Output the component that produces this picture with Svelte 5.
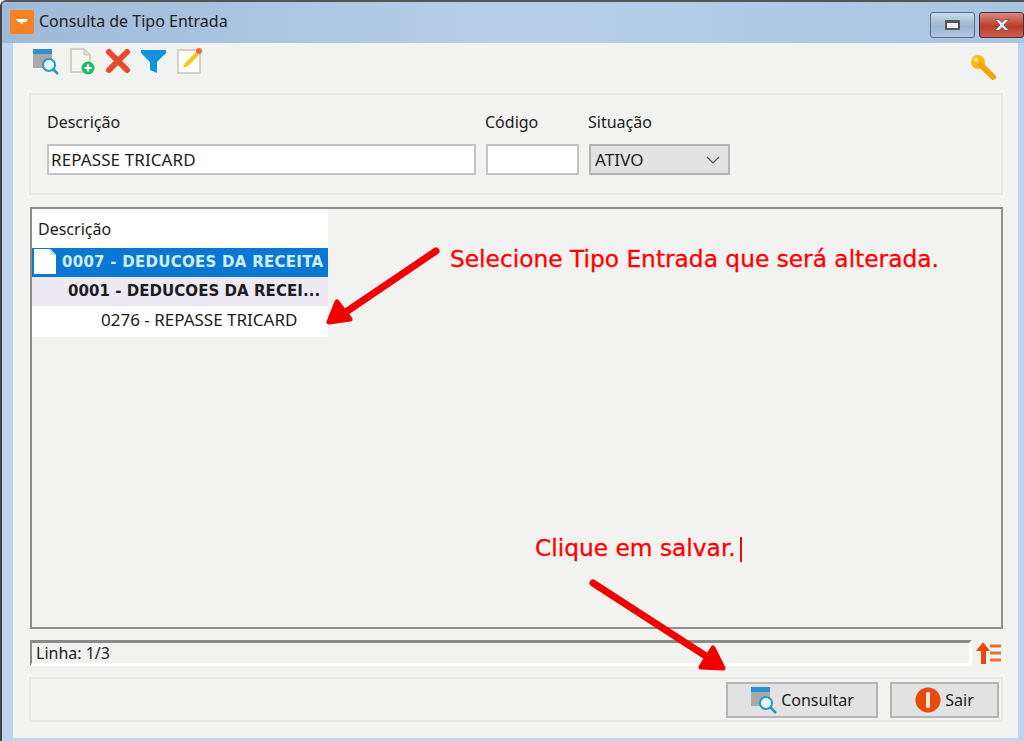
<script>
  const rows = [
    { text: "0007 - DEDUCOES DA RECEITA", cls: "selected" },
    { text: "0001 - DEDUCOES DA RECEI...", cls: "group" },
    { text: "0276 - REPASSE TRICARD", cls: "leaf" }
  ];
</script>

<div class="window">
  <header class="titlebar">
    <span class="app-icon">
      <svg width="24" height="24" viewBox="0 0 24 24">
        <rect width="24" height="24" rx="2" fill="#f58220" />
        <path d="M6 9h12l-2 3h-3l-1 3-2-3H8z" fill="#fff" />
      </svg>
    </span>
    <span class="title">Consulta de Tipo Entrada</span>
    <div class="win-buttons">
      <div class="win-btn restore"><span></span></div>
      <div class="win-btn close">
        <svg width="20" height="14" viewBox="0 0 20 14">
          <path d="M3 1.500h4l3 3 3-3h4l-5 5.500 5 5.500h-4l-3-3-3 3H3l5-5.500z" fill="#eee" stroke="#555" stroke-width=".8" />
        </svg>
      </div>
    </div>
  </header>

  <main class="content">
    <div class="toolbar">
      <div class="tools">
        <svg width="28" height="28" viewBox="0 0 28 28">
          <rect x="1" y="2" width="19" height="19" fill="#a9a9a9" />
          <rect x="1" y="2" width="19" height="5" fill="#2f8fd0" />
          <circle cx="17" cy="18" r="6" fill="#e8f6fc" stroke="#1f9ccf" stroke-width="2" />
          <path d="M21 22l5 5" stroke="#1f9ccf" stroke-width="2.500" />
        </svg>
        <svg width="28" height="28" viewBox="0 0 28 28">
          <path d="M3 2h13l6 6v17H3z" fill="#f6f6f0" stroke="#c4c4b8" stroke-width="1.500" />
          <path d="M16 2v6h6" fill="#ddd" stroke="#c4c4b8" />
          <circle cx="20" cy="21" r="6.500" fill="#1dbb62" />
          <path d="M16.500 21h7M20 17.500v7" stroke="#fff" stroke-width="2.200" />
        </svg>
        <svg width="28" height="28" viewBox="0 0 28 28">
          <path d="M5 5l18 18M23 5L5 23" stroke="#e8492c" stroke-width="6" stroke-linecap="round" />
        </svg>
        <svg width="28" height="28" viewBox="0 0 28 28">
          <path d="M1 3h25v3l-9 9v11l-7-3v-8L1 6z" fill="#1294dc" />
        </svg>
        <svg width="28" height="28" viewBox="0 0 28 28">
          <rect x="2" y="3" width="22" height="23" fill="#fcfcf8" stroke="#c4c4b8" stroke-width="1.500" />
          <path d="M7 21l2-5L20 5l3 3L12 19z" fill="#f7c51e" />
          <circle cx="23" cy="4" r="3" fill="#ea6a3a" />
        </svg>
      </div>
      <svg class="key" width="28" height="28" viewBox="0 0 28 28">
        <circle cx="9" cy="9" r="7" fill="#fbb80f" />
        <circle cx="7" cy="7" r="2" fill="#ffe9a8" />
        <path d="M12 12l12 12" stroke="#f9a10c" stroke-width="6" stroke-linecap="round" />
      </svg>
    </div>

    <section class="filters">
      <label class="field desc">
        <span>Descrição</span>
        <div class="input">REPASSE TRICARD</div>
      </label>
      <label class="field code">
        <span>Código</span>
        <div class="input"></div>
      </label>
      <label class="field status">
        <span>Situação</span>
        <div class="input select">
          ATIVO
          <svg width="14" height="8" viewBox="0 0 14 8">
            <path d="M1 1l6 6 6-6" fill="none" stroke="#555" stroke-width="1.200" />
          </svg>
        </div>
      </label>
    </section>

    <section class="grid">
      <div class="tree">
        <div class="tree-head">Descrição</div>
        {#each rows as row}
          <div class="row {row.cls}">
            {#if row.cls === "selected"}
              <svg class="doc" width="24" height="26" viewBox="0 0 24 26">
                <path d="M1 1h16l6 6v19H1z" fill="#fff" />
                <path d="M17 1v6h6z" fill="#c9dff0" />
              </svg>
            {/if}
            <span>{row.text}</span>
          </div>
        {/each}
      </div>
    </section>

    <div class="status-row">
      <div class="status-bar">Linha: 1/3</div>
      <svg width="28" height="26" viewBox="0 0 28 26">
        <path d="M8 2l7 9h-4v13H6V11H1z" fill="#e8480c" />
        <path d="M15 6h11M15 13h11M15 20h11" stroke="#e8702c" stroke-width="3" />
      </svg>
    </div>

    <footer class="actions">
      <button class="consultar">
        <svg width="28" height="28" viewBox="0 0 28 28">
          <rect x="1" y="1" width="19" height="19" fill="#a9a9a9" />
          <rect x="1" y="1" width="19" height="5" fill="#2f8fd0" />
          <circle cx="16" cy="17" r="6" fill="#e8f6fc" stroke="#1f9ccf" stroke-width="2" />
          <path d="M20 21l6 6" stroke="#1f9ccf" stroke-width="2.500" />
        </svg>
        Consultar
      </button>
      <button class="sair">
        <svg width="26" height="26" viewBox="0 0 26 26">
          <circle cx="13" cy="13" r="12.500" fill="#e84a0a" />
          <rect x="11" y="5" width="4" height="16" rx="1" fill="#f5e6dc" />
        </svg>
        Sair
      </button>
    </footer>
  </main>

  <p class="note note-select">Selecione Tipo Entrada que será alterada.</p>
  <p class="note note-save">Clique em salvar.<span class="caret"></span></p>
  <svg class="arrows" width="1024" height="741" viewBox="0 0 1024 741">
    <path d="M436 251L340 316" stroke="#f00000" stroke-width="7" stroke-linecap="round" />
    <path d="M337 302l-8 20 21-3z" fill="#f00000" stroke="#f00000" stroke-width="5" stroke-linejoin="round" />
    <path d="M593 583L712 660" stroke="#f00000" stroke-width="7" stroke-linecap="round" />
    <path d="M713 648l10 20-22-1z" fill="#f00000" stroke="#f00000" stroke-width="5" stroke-linejoin="round" />
  </svg>
</div>

<style>
  :global(body) {
    margin: 0;
    background: #fff;
  }

  .window {
    position: relative;
    width: 1024px;
    height: 741px;
    box-sizing: border-box;
    display: flex;
    flex-direction: column;
    overflow: hidden;
    font-family: "Noto Sans", "Open Sans", sans-serif;
    font-size: 16px;
    color: #1c1c1c;
    background: #bcd5ee;
    border-top: 2px solid #555;
    border-left: 2px solid #444;
    border-top-left-radius: 6px;
  }

  .titlebar {
    height: 41px;
    flex: none;
    box-sizing: border-box;
    padding: 4px 0 0 8px;
    display: flex;
    align-items: flex-start;
    gap: 5px;
    background: linear-gradient(to right, #9fb9d8, #b7cfe8 50%, #a9c4e2);
  }

  .app-icon {
    height: 24px;
    margin-top: 4px;
  }

  .title {
    margin-top: 4px;
    line-height: 22px;
  }

  .win-buttons {
    margin-left: auto;
    display: flex;
    gap: 4px;
    margin-top: 6px;
  }

  .win-btn {
    height: 26px;
    box-sizing: border-box;
    border: 1px solid #5a6b85;
    border-radius: 3px;
    display: flex;
    align-items: center;
    justify-content: center;
  }

  .restore {
    width: 45px;
    background: linear-gradient(#c8d9ec, #9bb5d3 55%, #aec5de);
  }

  .restore span {
    width: 15px;
    height: 10px;
    box-sizing: border-box;
    background: #eef1f5;
    border: 2px solid #555;
    border-top-width: 3px;
    border-radius: 1px;
  }

  .close {
    width: 45px;
    background: linear-gradient(#d98a7e, #bb3c2a 55%, #c9604d);
    border-color: #4e2a33;
  }

  .content {
    flex: 1;
    margin: 0 6px 3px 11px;
    padding: 0 15px 0 16px;
    background: #f2f2f1;
    display: flex;
    flex-direction: column;
  }

  .toolbar {
    height: 50px;
    flex: none;
    display: flex;
    justify-content: space-between;
    align-items: flex-start;
    padding: 4px 6px 0 3px;
    box-sizing: border-box;
  }

  .tools {
    display: flex;
    gap: 8px;
  }

  .key {
    margin-top: 6px;
  }

  .filters {
    height: 102px;
    flex: none;
    box-sizing: border-box;
    border: 2px solid #e7e7e6;
    padding: 16px 0 0 16px;
    display: flex;
    gap: 10px;
  }

  .field {
    display: flex;
    flex-direction: column;
    gap: 11px;
    line-height: 22px;
  }

  .code > span,
  .status > span {
    margin-left: -1px;
  }

  .desc { width: 429px; }
  .code { width: 93px; }
  .status { width: 141px; }

  .input {
    height: 31px;
    box-sizing: border-box;
    background: #fff;
    border: 2px solid #c4c4c6;
    padding: 0 2px;
    line-height: 27px;
    font-size: 17px;
    letter-spacing: 0.1px;
  }

  .select {
    background: #e2e2e2;
    border-color: #b4b4b4;
    padding: 0 8px 0 4px;
    display: flex;
    justify-content: space-between;
    align-items: center;
  }

  .grid {
    margin-top: 12px;
    margin-left: 1px;
    height: 422px;
    flex: none;
    box-sizing: border-box;
    border: 2px solid #8f8f8f;
  }

  .tree {
    width: 296px;
    background: #fff;
  }

  .tree-head {
    height: 39px;
    padding: 9px 0 0 6px;
    box-sizing: border-box;
    line-height: 22px;
  }

  .row {
    height: 29px;
    line-height: 28px;
    white-space: nowrap;
    position: relative;
    font-size: 17px;
  }

  .selected {
    background: #0a78d2;
    color: #cfeeff;
    font-family: "DejaVu Sans", sans-serif;
    font-size: 15px;
    font-weight: 700;
    letter-spacing: 0.27px;
    padding-left: 30px;
  }

  .doc {
    position: absolute;
    left: 1px;
    top: 0;
  }

  .group {
    background: #ece9f3;
    font-family: "DejaVu Sans", sans-serif;
    font-size: 15px;
    font-weight: 700;
    letter-spacing: 0.05px;
    padding-left: 36px;
  }

  .leaf {
    padding-left: 69px;
    height: 31px;
  }

  .status-row {
    margin-top: 11px;
    margin-left: 1px;
    display: flex;
    align-items: center;
    gap: 3px;
    flex: none;
  }

  .status-bar {
    width: 942px;
    height: 26px;
    box-sizing: border-box;
    border-top: 3px solid #8a8a8a;
    border-left: 2px solid #8a8a8a;
    border-bottom: 3px solid #fff;
    border-right: 3px solid #fff;
    padding-left: 4px;
    line-height: 21px;
  }

  .actions {
    margin-top: 11px;
    height: 45px;
    flex: none;
    box-sizing: border-box;
    border: 2px solid #e7e7e6;
    display: flex;
    justify-content: flex-end;
    align-items: center;
    gap: 12px;
    padding-right: 2px;
  }

  button {
    height: 36px;
    box-sizing: border-box;
    border: 2px solid #b4b4b4;
    background: #e2e2e2;
    font: inherit;
    color: inherit;
    display: flex;
    align-items: center;
    justify-content: center;
    padding: 0;
  }

  .consultar {
    width: 152px;
    gap: 3px;
  }

  .sair {
    width: 109px;
    gap: 4px;
  }

  .note {
    position: absolute;
    margin: 0;
    color: #ff0000;
    font-family: "DejaVu Sans", sans-serif;
    font-size: 23.300px;
    line-height: 30px;
    white-space: nowrap;
    -webkit-text-stroke: 0.3px #ff0000;
  }

  .note-select {
    left: 448px;
    top: 242px;
  }

  .note-save {
    left: 533px;
    top: 531px;
  }

  .caret {
    display: inline-block;
    width: 2px;
    height: 25px;
    margin-left: 4px;
    background: #e01010;
    vertical-align: -6px;
  }

  .arrows {
    position: absolute;
    left: -2px;
    top: -2px;
    pointer-events: none;
  }
</style>
